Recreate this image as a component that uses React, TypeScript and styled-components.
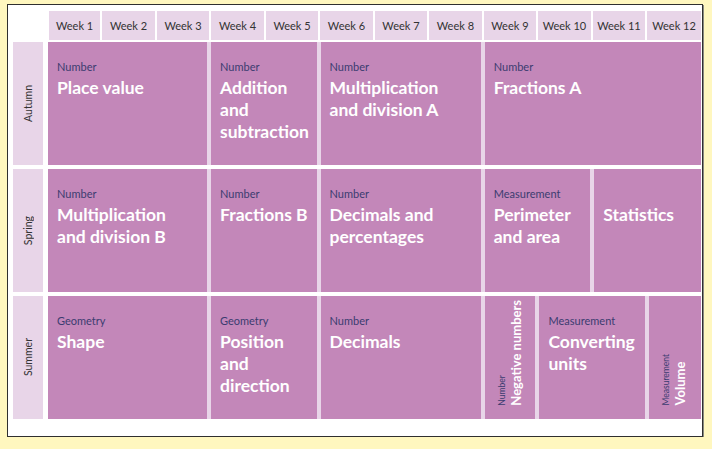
import React from "react";
import styled, { createGlobalStyle } from "styled-components";

const PURPLE = "#c387b9";
const LAVENDER = "#e8d5e8";
const COLS = "49.5fr repeat(10, 50.7fr) 52fr";

type Block = {
  span: number;
  strand?: string;
  title: string;
  vertical?: boolean;
};

type Season = { name: string; blocks: Block[] };

const weeks = Array.from({ length: 12 }, (_, i) => `Week ${i + 1}`);

const seasons: Season[] = [
  {
    name: "Autumn",
    blocks: [
      { span: 3, strand: "Number", title: "Place value" },
      { span: 2, strand: "Number", title: "Addition\nand\nsubtraction" },
      { span: 3, strand: "Number", title: "Multiplication\nand division A" },
      { span: 4, strand: "Number", title: "Fractions A" },
    ],
  },
  {
    name: "Spring",
    blocks: [
      { span: 3, strand: "Number", title: "Multiplication\nand division B" },
      { span: 2, strand: "Number", title: "Fractions B" },
      { span: 3, strand: "Number", title: "Decimals and\npercentages" },
      { span: 2, strand: "Measurement", title: "Perimeter\nand area" },
      { span: 2, title: "Statistics" },
    ],
  },
  {
    name: "Summer",
    blocks: [
      { span: 3, strand: "Geometry", title: "Shape" },
      { span: 2, strand: "Geometry", title: "Position\nand\ndirection" },
      { span: 3, strand: "Number", title: "Decimals" },
      { span: 1, strand: "Number", title: "Negative numbers", vertical: true },
      { span: 2, strand: "Measurement", title: "Converting\nunits" },
      { span: 1, strand: "Measurement", title: "Volume", vertical: true },
    ],
  },
];

const App: React.FC = () => {
  return (
    <Page>
      <GlobalStyle />
      <Panel>
        <HeaderRow>
          <Corner />
          <WeekTrack>
            {weeks.map((w) => (
              <WeekCell key={w}>{w}</WeekCell>
            ))}
          </WeekTrack>
        </HeaderRow>

        <Rows>
          {seasons.map((season) => (
            <SeasonRow key={season.name}>
              <SeasonCell>
                <SeasonName>{season.name}</SeasonName>
              </SeasonCell>
              <BlockTrack>
                {season.blocks.map((b) =>
                  b.vertical ? (
                    <UnitBlock key={b.title} $span={b.span} $vertical>
                      <VerticalText>
                        <SmallStrand>{b.strand}</SmallStrand>
                        <SmallTitle>{b.title}</SmallTitle>
                      </VerticalText>
                    </UnitBlock>
                  ) : (
                    <UnitBlock key={b.title} $span={b.span}>
                      <Strand>{b.strand}</Strand>
                      <Title>{b.title}</Title>
                    </UnitBlock>
                  )
                )}
              </BlockTrack>
            </SeasonRow>
          ))}
        </Rows>
      </Panel>
    </Page>
  );
};

const GlobalStyle = createGlobalStyle`
  html, body {
    margin: 0;
    background: #fff7bf;
  }
  body {
    font-family: Lato, "Open Sans", sans-serif;
  }
`;

const Page = styled.div`
  padding: 4px 0 0 7px;
`;

const Panel = styled.div`
  box-sizing: border-box;
  width: 696px;
  background: #fff;
  border: 1px solid #2f2f2f;
  box-shadow: 1px 1px 0 #8a8a80;
  padding: 6px 1px 17px 5px;
`;

const HeaderRow = styled.div`
  display: flex;
  height: 29px;
  margin-bottom: 2px;
`;

const Corner = styled.div`
  flex: none;
  width: 35px;
`;

const WeekTrack = styled.div`
  flex: 1;
  display: grid;
  grid-template-columns: ${COLS};
  column-gap: 2px;
  padding-left: 1px;
`;

const WeekCell = styled.div`
  display: flex;
  align-items: center;
  justify-content: center;
  background: ${LAVENDER};
  color: #333;
  font-size: 11px;
  white-space: nowrap;
`;

const Rows = styled.div`
  display: flex;
  flex-direction: column;
  gap: 4px;
`;

const SeasonRow = styled.div`
  display: flex;
  height: 123px;
`;

const SeasonCell = styled.div`
  flex: none;
  width: 30px;
  margin-right: 5px;
  background: ${LAVENDER};
  display: flex;
  align-items: center;
  justify-content: center;
`;

const SeasonName = styled.span`
  writing-mode: vertical-rl;
  transform: rotate(180deg);
  font-size: 10.5px;
  color: #333;
`;

const BlockTrack = styled.div`
  flex: 1;
  display: grid;
  grid-template-columns: ${COLS};
  column-gap: 4px;
  background: ${LAVENDER};
`;

const UnitBlock = styled.div<{ $span: number; $vertical?: boolean }>`
  grid-column: span ${({ $span }) => $span};
  background: ${PURPLE};
  min-width: 0;
  ${({ $vertical }) =>
    $vertical
      ? `
    display: flex;
    align-items: flex-end;
    justify-content: center;
    padding-bottom: 13px;
  `
      : `
    padding: 18px 4px 0 9px;
  `}
`;

const Strand = styled.div`
  font-size: 11px;
  line-height: 13px;
  min-height: 13px;
  color: #3b3c70;
`;

const Title = styled.div`
  margin-top: 4px;
  font-size: 17.5px;
  line-height: 22px;
  font-weight: 700;
  color: #fff;
  white-space: pre-line;
`;

const VerticalText = styled.div`
  writing-mode: vertical-rl;
  transform: rotate(180deg);
  white-space: nowrap;
`;

const SmallStrand = styled.div`
  font-size: 8.5px;
  line-height: 11px;
  color: #3b3c70;
`;

const SmallTitle = styled.div`
  font-size: 13px;
  line-height: 16px;
  font-weight: 700;
  color: #fff;
`;

export default App;
